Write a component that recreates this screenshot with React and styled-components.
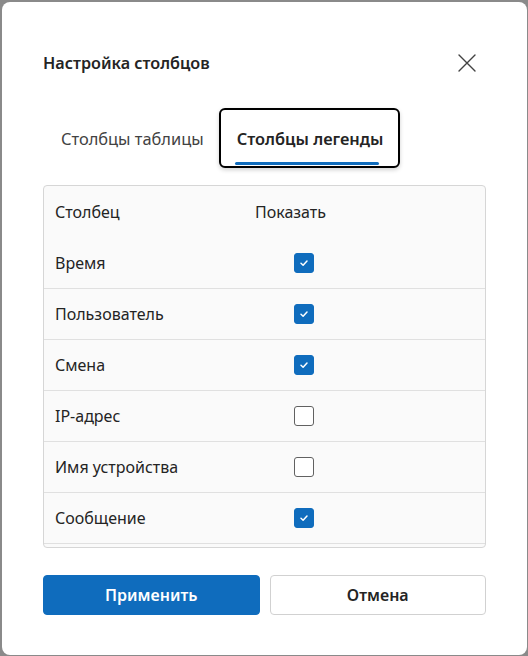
import React from "react";
import styled, { createGlobalStyle } from "styled-components";

const Global = createGlobalStyle`
  html, body { margin: 0; padding: 0; background: #8a8a8a; }
  body { font-family: "Noto Sans", "Open Sans", sans-serif; color: #242424; }
  * { box-sizing: border-box; }
`;

const Backdrop = styled.div`
  width: 528px;
  height: 656px;
  padding: 2px 1px 1px 2px;
  background: #8a8a8a;
`;

const Dialog = styled.div`
  width: 100%;
  height: 100%;
  background: #fff;
  border-radius: 8px;
  padding: 46px 41px 0 41px;
  display: flex;
  flex-direction: column;
`;

const Header = styled.div`
  display: flex;
  align-items: center;
  justify-content: space-between;
  height: 30px;
`;

const Title = styled.h2`
  margin: 0;
  font-size: 16.2px;
  font-weight: 600;
  color: #242424;
`;

const CloseButton = styled.button`
  border: 0;
  background: none;
  padding: 0;
  width: 20px;
  height: 20px;
  margin-right: 9px;
  display: flex;
  align-items: center;
  justify-content: center;
  color: #424242;
`;

const Tabs = styled.div`
  display: flex;
  align-items: center;
  margin-top: 30px;
`;

const Tab = styled.button`
  font-family: inherit;
  font-size: 16.4px;
  background: #fff;
  height: 60px;
  padding: 0 15px 0 16px;
  position: relative;
  display: flex;
  align-items: center;
  border-radius: 6px;
  color: ${(p) => (p.$active ? "#242424" : "#424242")};
  font-weight: ${(p) => (p.$active ? 600 : 400)};
  border: 2px solid ${(p) => (p.$active ? "#000" : "transparent")};
  box-shadow: ${(p) => (p.$active ? "0 2px 4px rgba(0,0,0,0.18)" : "none")};
  margin-left: ${(p) => (p.$active ? "-2px" : "0")};
`;

const Underline = styled.span`
  position: absolute;
  left: 14px;
  right: 19px;
  bottom: 1px;
  height: 3px;
  border-radius: 2px;
  background: #0f6cbd;
`;

const Table = styled.div`
  margin-top: 17px;
  height: 363px;
  border: 1px solid #d6d6d6;
  border-radius: 4px;
  background: #fafafa;
  overflow: hidden;
`;

const Row = styled.div`
  display: grid;
  grid-template-columns: 200px 1fr;
  align-items: center;
  height: ${(p) => (p.$head ? "52px" : "51px")};
  padding: 0 11px;
  border-bottom: ${(p) => (p.$head ? "none" : "1px solid #e0e0e0")};
  font-size: 16px;
  color: #242424;
`;

const Check = styled.span`
  width: 20px;
  height: 20px;
  margin-left: 39px;
  border-radius: 3px;
  display: flex;
  align-items: center;
  justify-content: center;
  background: ${(p) => (p.$on ? "#0f6cbd" : "#fff")};
  border: 1px solid ${(p) => (p.$on ? "#0f6cbd" : "#616161")};
`;

const Footer = styled.div`
  display: grid;
  grid-template-columns: 1fr 1fr;
  gap: 10px;
  margin-top: 27px;
`;

const Button = styled.button`
  height: 40px;
  border-radius: 4px;
  font-family: inherit;
  font-size: 16px;
  font-weight: 600;
  background: ${(p) => (p.$primary ? "#0f6cbd" : "#fff")};
  color: ${(p) => (p.$primary ? "#fff" : "#242424")};
  border: 1px solid ${(p) => (p.$primary ? "#0f6cbd" : "#d1d1d1")};
`;

const rows = [
  ["Время", true],
  ["Пользователь", true],
  ["Смена", true],
  ["IP-адрес", false],
  ["Имя устройства", false],
  ["Сообщение", true],
];

export default function App() {
  return (
    <>
      <Global />
      <Backdrop>
        <Dialog>
          <Header>
            <Title>Настройка столбцов</Title>
            <CloseButton aria-label="Закрыть">
              <svg width="18" height="18" viewBox="0 0 18 18">
                <path d="M1 1L17 17M17 1L1 17" stroke="#424242" strokeWidth="1.4" strokeLinecap="round" />
              </svg>
            </CloseButton>
          </Header>
          <Tabs>
            <Tab>Столбцы таблицы</Tab>
            <Tab $active>
              Столбцы легенды
              <Underline />
            </Tab>
          </Tabs>
          <Table>
            <Row $head>
              <span>Столбец</span>
              <span>Показать</span>
            </Row>
            {rows.map(([name, on]) => (
              <Row key={name}>
                <span>{name}</span>
                <Check $on={on}>
                  {on && (
                    <svg width="12" height="12" viewBox="0 0 12 12">
                      <path d="M3 6.3L5.1 8.2L9 4" fill="none" stroke="#fff" strokeWidth="1.5" strokeLinecap="round" strokeLinejoin="round" />
                    </svg>
                  )}
                </Check>
              </Row>
            ))}
          </Table>
          <Footer>
            <Button $primary>Применить</Button>
            <Button>Отмена</Button>
          </Footer>
        </Dialog>
      </Backdrop>
    </>
  );
}
